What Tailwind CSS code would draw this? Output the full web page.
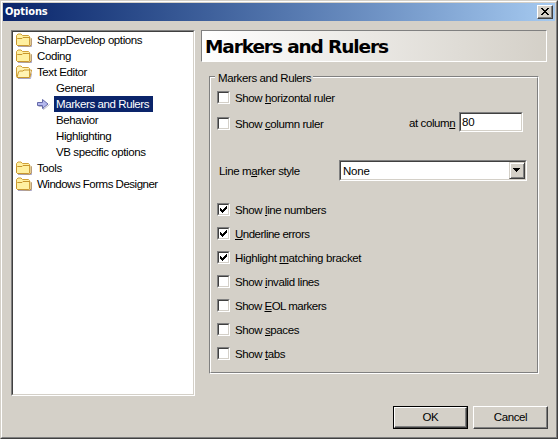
<!DOCTYPE html>
<html lang="en">
<head>
<meta charset="utf-8">
<title>Options</title>
<script src="https://cdn.jsdelivr.net/npm/@tailwindcss/browser@4"></script>
</head>
<body class="overflow-hidden">
<svg class="hidden">
  <defs>
    <linearGradient id="fg" x1="0" y1="0" x2="1" y2="1"><stop offset="0" stop-color="#fffbd0"/><stop offset="1" stop-color="#fad060"/></linearGradient>
    <symbol id="folder" viewBox="0 0 16 16">
      <path d="M2 14.500h13.500v-8" fill="none" stroke="#a9a5c5"/>
      <path d="M.5 12.500v-9l1.500-1.500h3l1.500 1.500h6l1 1v8.500l-1 .5h-11z" fill="#fff0a0" stroke="#d0a038"/>
      <path d="M1.500 13.500l-1-1v-5l1-1h4.500l1-1h7l1 1v6.500l-1 1z" fill="url(#fg)" stroke="#c8962c"/>
    </symbol>
    <symbol id="folder-open" viewBox="0 0 16 16">
      <path d="M2 14.500h12.500l1-5" fill="none" stroke="#a9a5c5"/>
      <path d="M.5 12.500v-9l1.500-1.500h3l1.500 1.500h6l1 1v8.500l-1 .5h-11z" fill="#fff3b4" stroke="#d0a038"/>
      <path d="M1 13.500l1.500-5.500 1-1h3.500l1-1h7.500l-1.500 7-1 .5z" fill="url(#fg)" stroke="#c8962c"/>
    </symbol>
    <symbol id="check" viewBox="0 0 7 7"><path d="M0 2h1v1h1v1h1v-1h1v-1h1v-1h1v-1h1v3h-1v1h-1v1h-1v1h-1v1h-1v-1h-1v-1h-1z"/></symbol>
  </defs>
</svg>
<div class="w-[558px] h-[439px] bg-[#d4d0c8] border border-t-[#d4d0c8] border-l-[#d4d0c8] border-r-[#404040] border-b-[#404040] font-['Liberation_Sans',Arial,sans-serif] text-[11.500px] leading-4 tracking-[-0.400px] text-black whitespace-nowrap">
<div class="h-full border border-t-white border-l-white border-r-[#808080] border-b-[#808080] p-px flex flex-col">
  <header class="h-[18px] shrink-0 flex items-center justify-between bg-linear-to-r from-[#0a246a] to-[#a6caf0] px-[2px]">
    <h1 class="font-['DejaVu_Sans_Condensed','DejaVu_Sans',sans-serif] font-bold text-[11px] tracking-[-0.1px] text-white">Options</h1>
    <button class="w-4 h-[14px] bg-[#d4d0c8] border border-t-white border-l-white border-r-[#404040] border-b-[#404040] shadow-[inset_-1px_-1px_#808080] flex pl-[3px] pt-[2px]"><svg class="w-2 h-[7px]" viewBox="0 0 8 7" shape-rendering="crispEdges"><path d="M0 0h2v1h1v1h2v-1h1v-1h2v1h-1v1h-1v1h-1v1h1v1h1v1h1v1h-2v-1h-1v-1h-2v1h-1v1h-2v-1h1v-1h1v-1h1v-1h-1v-1h-1v-1h-1z"/></svg></button>
  </header>
  <main class="flex pt-[9px] pl-2">
    <nav class="w-[184px] h-[366px] border border-t-[#808080] border-l-[#808080] border-r-white border-b-white">
      <ul class="h-full bg-white border border-t-[#404040] border-l-[#404040] border-r-[#d4d0c8] border-b-[#d4d0c8] pl-[3px]">
        <li class="flex h-4"><svg class="w-4 h-4 mr-[5px]"><use href="#folder"/></svg>SharpDevelop options</li>
        <li class="flex h-4"><svg class="w-4 h-4 mr-[5px]"><use href="#folder"/></svg>Coding</li>
        <li class="flex h-4"><svg class="w-4 h-4 mr-[5px]"><use href="#folder-open"/></svg>Text Editor</li>
        <li class="h-4 pl-10">General</li>
        <li class="flex h-4 pl-[20px]"><svg class="w-4 h-4 mr-[2px]" viewBox="0 0 16 16"><path d="M2.500 10.500h5v3l6-5" fill="none" stroke="#b8b8c8"/><path d="M1.500 6.500h5v-3l5.500 4.500-5.500 4.500v-3h-5z" fill="#b4b8ee" stroke="#6468a8"/></svg><span class="bg-[#0a246a] text-white w-[99px] pl-[2px]">Markers and Rulers</span></li>
        <li class="h-4 pl-10">Behavior</li>
        <li class="h-4 pl-10">Highlighting</li>
        <li class="h-4 pl-10">VB specific options</li>
        <li class="flex h-4"><svg class="w-4 h-4 mr-[5px]"><use href="#folder"/></svg>Tools</li>
        <li class="flex h-4 tracking-[-0.500px]"><svg class="w-4 h-4 mr-[5px]"><use href="#folder"/></svg>Windows Forms Designer</li>
      </ul>
    </nav>
    <section class="ml-[6px] w-[346px]">
      <h2 class="h-8 border border-t-[#808080] border-l-[#808080] border-r-white border-b-white bg-linear-to-r from-white to-[#d4d0c8] pl-[3px] pt-[4px] font-['DejaVu_Sans',sans-serif] font-bold text-[18.500px] leading-[24px] tracking-[-1.100px]">Markers and Rulers</h2>
      <div class="relative mt-[14px] ml-2 w-[330px] h-[298px] border border-t-[#808080] border-l-[#808080] border-r-white border-b-white">
        <h3 class="absolute left-[5px] -top-[7px] h-4 w-[98px] pl-[3px] bg-[#d4d0c8] tracking-[-0.400px]">Markers and Rulers</h3>
        <div class="h-full border border-t-white border-l-white border-r-[#808080] border-b-[#808080] pt-[13px] pl-[6px] leading-[14px]">
          <label class="flex h-[13px]"><span class="w-[13px] h-[13px] mr-[5px] border border-t-[#808080] border-l-[#808080] border-r-white border-b-white"><i class="block h-full bg-white border border-t-[#404040] border-l-[#404040] border-r-[#d4d0c8] border-b-[#d4d0c8]"></i></span><span>Show <u class="underline-offset-1">h</u>orizontal ruler</span></label>
          <div class="flex items-center h-5 mt-2">
            <label class="flex h-[13px] w-[192px] mt-[3px]"><span class="w-[13px] h-[13px] mr-[5px] border border-t-[#808080] border-l-[#808080] border-r-white border-b-white"><i class="block h-full bg-white border border-t-[#404040] border-l-[#404040] border-r-[#d4d0c8] border-b-[#d4d0c8]"></i></span><span>Show <u class="underline-offset-1">c</u>olumn ruler</span></label>
            <span class="w-[50px] mt-[2px]">at colum<u class="underline-offset-1">n</u></span>
            <div class="w-16 h-5 border border-t-[#808080] border-l-[#808080] border-r-white border-b-white"><div class="h-full bg-white border border-t-[#404040] border-l-[#404040] border-r-[#d4d0c8] border-b-[#d4d0c8] pl-[1px] leading-[17px] tracking-[-0.2px]">80</div></div>
          </div>
          <div class="flex items-center h-[21px] mt-7">
            <span class="w-[120px] pl-[2px]">Line m<u class="underline-offset-1">a</u>rker style</span>
            <div class="w-[188px] h-[21px] ml-[2px] border border-t-[#808080] border-l-[#808080] border-r-white border-b-white"><div class="h-full flex justify-between bg-white border border-t-[#404040] border-l-[#404040] border-r-[#d4d0c8] border-b-[#d4d0c8] pl-[2px] leading-[18px] tracking-[-0.2px]">None<button class="w-4 h-[17px] bg-[#d4d0c8] border border-t-[#d4d0c8] border-l-[#d4d0c8] border-r-[#404040] border-b-[#404040] shadow-[inset_1px_1px_#fff,inset_-1px_-1px_#808080] flex pl-[3px] pt-[5px]"><svg class="w-[7px] h-1" viewBox="0 0 7 4" shape-rendering="crispEdges"><path d="M0 0h7v1h-1v1h-1v1h-1v1h-1v-1h-1v-1h-1v-1h-1z"/></svg></button></div></div>
          </div>
          <div class="flex flex-col gap-[11px] mt-[22px]">
            <label class="flex h-[13px]"><span class="w-[13px] h-[13px] mr-[5px] border border-t-[#808080] border-l-[#808080] border-r-white border-b-white"><i class="block h-full bg-white border border-t-[#404040] border-l-[#404040] border-r-[#d4d0c8] border-b-[#d4d0c8] p-px"><svg class="w-[7px] h-[7px]" shape-rendering="crispEdges"><use href="#check"/></svg></i></span><span>Show <u class="underline-offset-1">l</u>ine numbers</span></label>
            <label class="flex h-[13px]"><span class="w-[13px] h-[13px] mr-[5px] border border-t-[#808080] border-l-[#808080] border-r-white border-b-white"><i class="block h-full bg-white border border-t-[#404040] border-l-[#404040] border-r-[#d4d0c8] border-b-[#d4d0c8] p-px"><svg class="w-[7px] h-[7px]" shape-rendering="crispEdges"><use href="#check"/></svg></i></span><span class="tracking-[-0.500px]"><u class="underline-offset-1">U</u>nderline errors</span></label>
            <label class="flex h-[13px]"><span class="w-[13px] h-[13px] mr-[5px] border border-t-[#808080] border-l-[#808080] border-r-white border-b-white"><i class="block h-full bg-white border border-t-[#404040] border-l-[#404040] border-r-[#d4d0c8] border-b-[#d4d0c8] p-px"><svg class="w-[7px] h-[7px]" shape-rendering="crispEdges"><use href="#check"/></svg></i></span><span class="tracking-[-0.360px]">Highlight <u class="underline-offset-1">m</u>atching bracket</span></label>
            <label class="flex h-[13px]"><span class="w-[13px] h-[13px] mr-[5px] border border-t-[#808080] border-l-[#808080] border-r-white border-b-white"><i class="block h-full bg-white border border-t-[#404040] border-l-[#404040] border-r-[#d4d0c8] border-b-[#d4d0c8]"></i></span><span>Show <u class="underline-offset-1">i</u>nvalid lines</span></label>
            <label class="flex h-[13px]"><span class="w-[13px] h-[13px] mr-[5px] border border-t-[#808080] border-l-[#808080] border-r-white border-b-white"><i class="block h-full bg-white border border-t-[#404040] border-l-[#404040] border-r-[#d4d0c8] border-b-[#d4d0c8]"></i></span><span class="tracking-[-0.500px]">Show <u class="underline-offset-1">E</u>OL markers</span></label>
            <label class="flex h-[13px]"><span class="w-[13px] h-[13px] mr-[5px] border border-t-[#808080] border-l-[#808080] border-r-white border-b-white"><i class="block h-full bg-white border border-t-[#404040] border-l-[#404040] border-r-[#d4d0c8] border-b-[#d4d0c8]"></i></span><span>Show <u class="underline-offset-1">s</u>paces</span></label>
            <label class="flex h-[13px]"><span class="w-[13px] h-[13px] mr-[5px] border border-t-[#808080] border-l-[#808080] border-r-white border-b-white"><i class="block h-full bg-white border border-t-[#404040] border-l-[#404040] border-r-[#d4d0c8] border-b-[#d4d0c8]"></i></span><span>Show <u class="underline-offset-1">t</u>abs</span></label>
          </div>
        </div>
      </div>
    </section>
  </main>
  <footer class="flex justify-end gap-[5px] mt-[10px] pr-[7px]">
    <button class="w-[75px] h-[23px] border border-black"><span class="flex items-center justify-center h-full border border-t-white border-l-white border-r-[#404040] border-b-[#404040] shadow-[inset_-1px_-1px_#808080] pb-[2px]">OK</span></button>
    <button class="w-[75px] h-[23px] border border-t-white border-l-white border-r-[#404040] border-b-[#404040] shadow-[inset_-1px_-1px_#808080] pb-[2px] tracking-[-0.400px]">Cancel</button>
  </footer>
</div>
</div>
</body>
</html>
